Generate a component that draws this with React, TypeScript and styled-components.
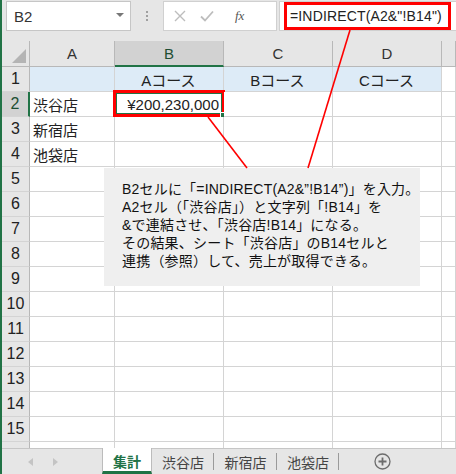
import React from "react";
import styled, { createGlobalStyle } from "styled-components";

const GREEN = "#217346";
const GRID = "#d4d4d4";
const HEAD_LINE = "#b8b8b8";

const GlobalStyle = createGlobalStyle`
  html, body { margin: 0; padding: 0; background: #fff; }
  body { font-family: "Liberation Sans", "Noto Sans CJK JP", sans-serif; color: #222; }
`;

const Root = styled.div`
  position: relative;
  width: 456px;
  height: 474px;
  overflow: hidden;
  display: flex;
`;

const GreenEdge = styled.div`
  width: 2px;
  background: ${GREEN};
  flex: none;
`;

const Main = styled.div`
  flex: 1;
  display: flex;
  flex-direction: column;
  min-width: 0;
`;

/* ---------- formula bar ---------- */

const FormulaBar = styled.div`
  height: 41px;
  flex: none;
  background: #e6e6e6;
  display: flex;
  align-items: flex-start;
  padding-top: 1px;
  box-sizing: border-box;
`;

const NameBox = styled.div`
  margin-left: 4px;
  width: 125px;
  height: 30px;
  box-sizing: border-box;
  background: #fff;
  border: 1px solid #c6c6c6;
  display: flex;
  align-items: center;
  justify-content: space-between;
  padding: 0 6px 0 7px;
  font-size: 15px;
  color: #333;
`;

const DropArrow = styled.span`
  width: 0;
  height: 0;
  border-left: 4px solid transparent;
  border-right: 4px solid transparent;
  border-top: 4px solid #777;
  margin-top: -3px;
`;

const Dots = styled.div`
  width: 32px;
  height: 30px;
  display: flex;
  flex-direction: column;
  align-items: center;
  justify-content: center;
  gap: 2px;
  span {
    width: 2px;
    height: 2px;
    background: #a0a0a0;
  }
`;

const ButtonBox = styled.div`
  width: 114px;
  height: 30px;
  box-sizing: border-box;
  background: #fff;
  border: 1px solid #d0d0d0;
  display: flex;
  align-items: center;
  padding-left: 10px;
  gap: 14px;
  color: #bdbdbd;
  font-size: 15px;
`;

const FxLabel = styled.span`
  margin-left: 7px;
  font-family: "Liberation Serif", serif;
  font-style: italic;
  font-size: 13px;
  color: #555;
`;

const FormulaBox = styled.div`
  margin-left: 2px;
  flex: 1;
  height: 30px;
  box-sizing: border-box;
  background: #fff;
  border: 1px solid #d0d0d0;
  border-right: none;
  padding-left: 4px;
  display: flex;
  align-items: center;
`;

const FormulaText = styled.span`
  border: 3px solid #ff0000;
  height: 28px;
  box-sizing: border-box;
  margin-top: -1px;
  padding: 0 6px 0 3px;
  display: flex;
  align-items: center;
  font-size: 14px;
  letter-spacing: 0.15px;
  color: #222;
  white-space: nowrap;
`;

/* ---------- sheet ---------- */

const Sheet = styled.div`
  flex: 1;
  overflow: hidden;
  display: grid;
  grid-template-columns: 28px 85px 109px 109px 109px 1fr;
  grid-template-rows: 26px;
  grid-auto-rows: 25px;
`;

const Corner = styled.div`
  background: #e6e6e6;
  border-right: 1px solid ${HEAD_LINE};
  border-bottom: 1px solid ${HEAD_LINE};
  position: relative;
  &::after {
    content: "";
    position: absolute;
    right: 3px;
    bottom: 3px;
    border-left: 14px solid transparent;
    border-bottom: 14px solid #b4b4b4;
  }
`;

const ColHead = styled.div<{ $active?: boolean }>`
  background: ${(p) => (p.$active ? "#d2d2d2" : "#e6e6e6")};
  border-right: 1px solid ${HEAD_LINE};
  border-bottom: ${(p) => (p.$active ? `2px solid ${GREEN}` : `1px solid ${HEAD_LINE}`)};
  display: flex;
  align-items: center;
  justify-content: center;
  font-size: 15px;
  color: ${(p) => (p.$active ? "#1e4e33" : "#333")};
`;

const RowHead = styled.div<{ $active?: boolean }>`
  background: ${(p) => (p.$active ? "#d2d2d2" : "#e6e6e6")};
  border-right: ${(p) => (p.$active ? `2px solid ${GREEN}` : `1px solid ${HEAD_LINE}`)};
  border-bottom: 1px solid ${GRID};
  display: flex;
  align-items: center;
  justify-content: center;
  font-size: 16px;
  color: ${(p) => (p.$active ? "#1e4e33" : "#222")};
`;

const Cell = styled.div<{ $fill?: boolean; $align?: "left" | "center" | "right" }>`
  position: relative;
  background: ${(p) => (p.$fill ? "#ddebf7" : "#fff")};
  border-right: 1px solid ${GRID};
  border-bottom: 1px solid ${GRID};
  display: flex;
  align-items: center;
  justify-content: ${(p) =>
    p.$align === "right" ? "flex-end" : p.$align === "center" ? "center" : "flex-start"};
  padding: 0 4px 0 3px;
  font-size: 15px;
  white-space: nowrap;
  color: #222;
`;

const RedFrame = styled.div`
  position: absolute;
  top: -2px;
  left: -2px;
  right: -2px;
  bottom: -1px;
  border: 3px solid #ff0000;
  box-shadow: inset 0 0 0 1px ${GREEN};
  pointer-events: none;
`;

const FillHandle = styled.div`
  position: absolute;
  right: -4px;
  bottom: -3px;
  width: 5px;
  height: 5px;
  background: ${GREEN};
  border: 1px solid #fff;
`;

/* ---------- overlays ---------- */

const Callout = styled.div`
  position: absolute;
  left: 104px;
  top: 168px;
  width: 316px;
  height: 118px;
  box-sizing: border-box;
  background: #efefef;
  padding: 12px 0 0 18px;
  font-size: 14px;
  line-height: 18px;
  letter-spacing: 0.2px;
  color: #111;
  white-space: nowrap;
`;

const Leaders = styled.svg`
  position: absolute;
  left: 0;
  top: 0;
  pointer-events: none;
`;

/* ---------- tabs ---------- */

const TabBar = styled.div`
  height: 26px;
  flex: none;
  background: #e6e6e6;
  border-top: 1px solid #c6c6c6;
  box-sizing: border-box;
  display: flex;
  align-items: stretch;
`;

const TabNav = styled.div`
  width: 100px;
  display: flex;
  align-items: center;
  padding-left: 26px;
  gap: 20px;
  box-sizing: border-box;
`;

const NavArrow = styled.span<{ $dir: "left" | "right" }>`
  width: 0;
  height: 0;
  border-top: 4px solid transparent;
  border-bottom: 4px solid transparent;
  ${(p) =>
    p.$dir === "left" ? "border-right: 5px solid #c4c4c4;" : "border-left: 5px solid #c4c4c4;"}
`;

const Tab = styled.div<{ $active?: boolean; $w: number }>`
  width: ${(p) => p.$w}px;
  box-sizing: border-box;
  display: flex;
  align-items: center;
  justify-content: center;
  font-family: "Noto Sans CJK JP", sans-serif;
  font-size: 14px;
  position: relative;
  ${(p) =>
    p.$active
      ? `
    background: #fff;
    color: ${GREEN};
    font-weight: 700;
    margin-top: -1px;
    border-left: 1px solid #bcbcbc;
    border-right: 1px solid #bcbcbc;
    border-bottom: 3px solid ${GREEN};
    padding-top: 2px;
  `
      : `
    color: #444;
    &::after {
      content: "";
      position: absolute;
      right: 0;
      top: 4px;
      bottom: 4px;
      width: 1px;
      background: #9a9a9a;
    }
  `}
`;

const AddSheet = styled.div`
  margin-left: 35px;
  display: flex;
  align-items: center;
`;

type RowData = { a?: string; b?: string; c?: string; d?: string; fill?: boolean };

const rows: RowData[] = [
  { a: "", b: "Aコース", c: "Bコース", d: "Cコース", fill: true },
  { a: "渋谷店", b: "¥200,230,000" },
  { a: "新宿店" },
  { a: "池袋店" },
];

export default function App() {
  const body = [];
  for (let r = 1; r <= 16; r++) {
    const d = rows[r - 1] || {};
    const fill = !!d.fill;
    body.push(
      <React.Fragment key={r}>
        {/* row 16 is only a sliver below row 15, so no number shows */}
        <RowHead $active={r === 2}>{r < 16 ? r : ""}</RowHead>
        <Cell $fill={fill}>{d.a}</Cell>
        {r === 2 ? (
          <Cell $align="right">
            {d.b}
            <RedFrame />
            <FillHandle />
          </Cell>
        ) : (
          <Cell $fill={fill} $align="center">
            {d.b}
          </Cell>
        )}
        <Cell $fill={fill} $align="center">
          {d.c}
        </Cell>
        <Cell $fill={fill} $align="center">
          {d.d}
        </Cell>
        <Cell />
      </React.Fragment>
    );
  }

  return (
    <Root>
      <GlobalStyle />
      <GreenEdge />
      <Main>
        <FormulaBar>
          <NameBox>
            B2
            <DropArrow />
          </NameBox>
          <Dots>
            <span />
            <span />
            <span />
          </Dots>
          <ButtonBox>
            <svg width="12" height="12" viewBox="0 0 12 12">
              <path d="M1 1L11 11M11 1L1 11" stroke="#bdbdbd" strokeWidth="1.4" fill="none" />
            </svg>
            <svg width="14" height="12" viewBox="0 0 14 12">
              <path d="M1 6.5L5 10.5L13 1.5" stroke="#bdbdbd" strokeWidth="1.8" fill="none" />
            </svg>
            <FxLabel>fx</FxLabel>
          </ButtonBox>
          <FormulaBox>
            <FormulaText>=INDIRECT(A2&amp;"!B14")</FormulaText>
          </FormulaBox>
        </FormulaBar>

        <Sheet>
          <Corner />
          <ColHead>A</ColHead>
          <ColHead $active>B</ColHead>
          <ColHead>C</ColHead>
          <ColHead>D</ColHead>
          <ColHead />
          {body}
        </Sheet>

        <TabBar>
          <TabNav>
            <NavArrow $dir="left" />
            <NavArrow $dir="right" />
          </TabNav>
          <Tab $active $w={50}>集計</Tab>
          <Tab $w={62}>渋谷店</Tab>
          <Tab $w={63}>新宿店</Tab>
          <Tab $w={62}>池袋店</Tab>
          <AddSheet>
            <svg width="17" height="17" viewBox="0 0 17 17">
              <circle cx="8.5" cy="8.5" r="7.5" stroke="#6d6d6d" strokeWidth="1.3" fill="none" />
              <path d="M8.5 4.5V12.5M4.5 8.5H12.5" stroke="#6d6d6d" strokeWidth="1.8" />
            </svg>
          </AddSheet>
        </TabBar>
      </Main>

      <Callout>
        B2セルに「=INDIRECT(A2&amp;”!B14”)」を入力。
        <br />
        A2セル（「渋谷店」）と文字列「!B14」を
        <br />
        &amp;で連結させ、「渋谷店!B14」になる。
        <br />
        その結果、シート「渋谷店」のB14セルと
        <br />
        連携（参照）して、売上が取得できる。
      </Callout>

      <Leaders width="456" height="474" viewBox="0 0 456 474">
        <line x1="350" y1="30" x2="308" y2="168" stroke="#ff0000" strokeWidth="1.6" />
        <line x1="208" y1="117" x2="247" y2="168" stroke="#ff0000" strokeWidth="1.6" />
      </Leaders>
    </Root>
  );
}
